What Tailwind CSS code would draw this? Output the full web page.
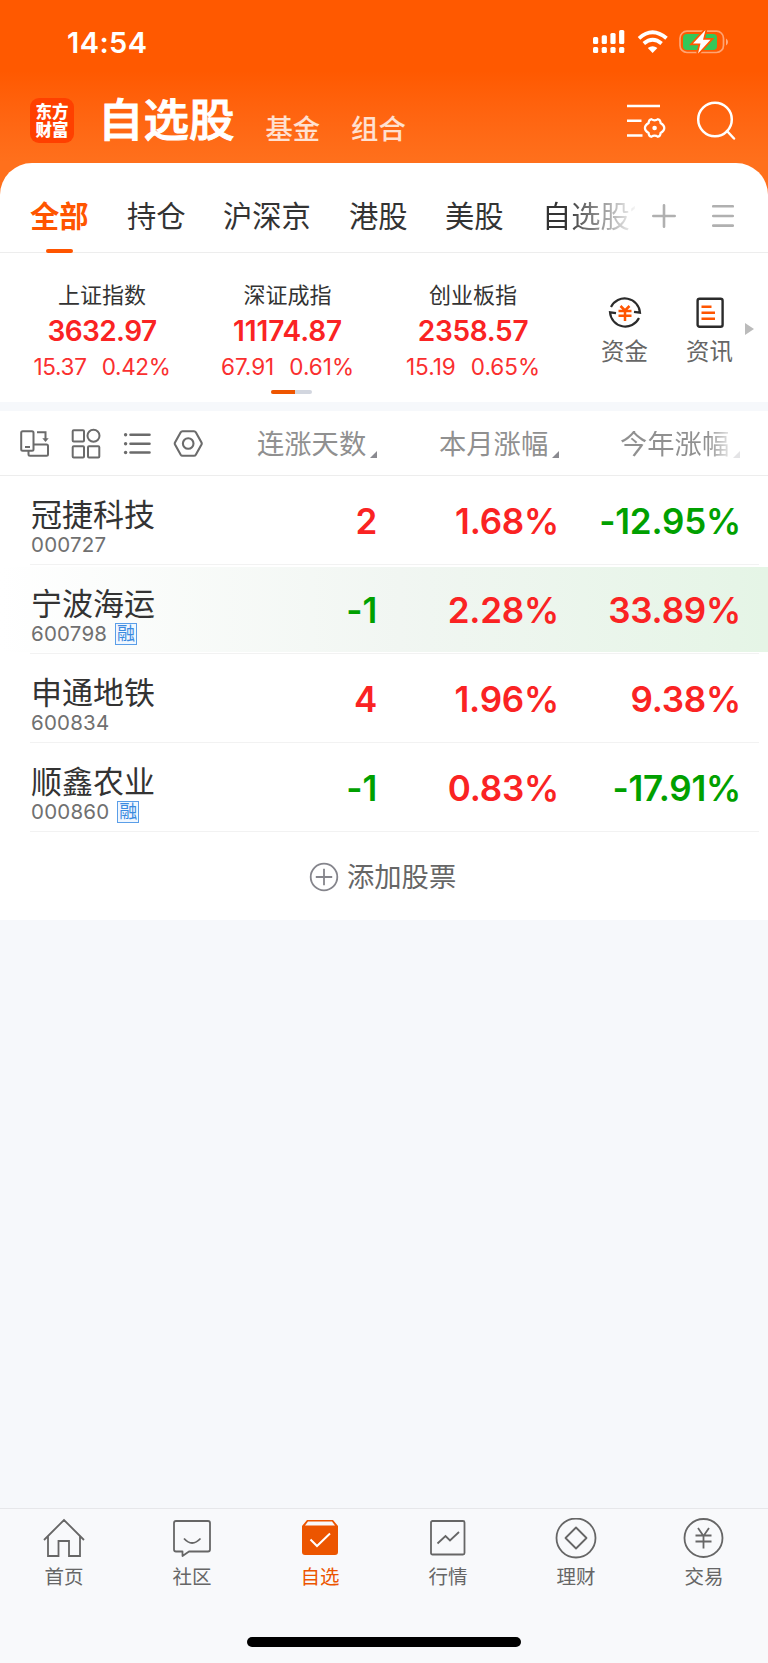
<!DOCTYPE html>
<html lang="zh-CN">
<head>
    <meta charset="UTF-8">
    <meta name="viewport" content="width=device-width, initial-scale=1.0">
    <title>自选股</title>
    <script src="https://cdn.jsdelivr.net/npm/@tailwindcss/browser@4"></script>
</head>
<body class="w-[768px] h-[1663px] flex flex-col overflow-hidden bg-[#f6f8fb] font-['Inter','Noto_Sans_CJK_SC',sans-serif] leading-none whitespace-nowrap text-[#333]">

    <!-- Cabecera -->
    <header class="h-[203px] -mb-10 shrink-0 bg-linear-to-b from-[#ff5900] from-35% to-[#ff701c] to-80% text-white">
        <div class="h-[84px] flex items-center justify-between pl-[67px] pr-10">
            <span class="text-[29px] font-semibold tracking-[0.4px]">14:54</span>
            <svg class="w-[136px] h-6" viewBox="0 0 136 24" fill="#fff">
                <rect x="1" y="7" width="5.2" height="7" rx="1.5"/>
                <rect x="9.7" y="5.3" width="5.2" height="8.7" rx="1.5"/>
                <rect x="18.4" y="3" width="5.2" height="11" rx="1.5"/>
                <rect x="27.1" y="0" width="5.2" height="14" rx="1.5"/>
                <rect x="1" y="17" width="5.2" height="6" rx="1.5"/>
                <rect x="9.7" y="17" width="5.2" height="6" rx="1.5"/>
                <rect x="18.4" y="17" width="5.2" height="6" rx="1.5"/>
                <rect x="27.1" y="17" width="5.2" height="6" rx="1.5"/>
                <g fill="none" stroke="#fff" stroke-width="3.8">
                    <path d="M47 8.3 Q60.5 -3.8 74.5 8.3"/>
                    <path d="M51.8 13.5 Q60.6 6 69.6 13.5"/>
                </g>
                <path d="M55.8 18 Q60.6 14.4 65.4 18 L60.6 23Z"/>
                <rect x="88" y="1.2" width="43.5" height="21.3" rx="7" fill="none" stroke="#fff" stroke-opacity=".45" stroke-width="1.7"/>
                <path d="M134 8.5 Q136 9.5 136 12 Q136 14.5 134 15.5Z" fill-opacity=".5"/>
                <rect x="91" y="4" width="34" height="16" rx="4" fill="#34c759"/>
                <path d="M113.5 0 L101 13.5 H108.5 L106 23.5 L118.5 9.8 H111Z" stroke="#ff5900" stroke-width="3.5" paint-order="stroke"/>
            </svg>
        </div>
        <div class="h-[79px] flex items-start pl-[30px] pr-8">
            <div class="mt-[14px] w-11 h-[45px] rounded-[9px] bg-[#ff4000] flex flex-col items-center justify-center text-[16.5px] leading-[18px] font-black">
                <span>东方</span>
                <span>财富</span>
            </div>
            <h1 class="mt-[14px] ml-6 text-[45.5px] font-medium [-webkit-text-stroke:1px_white]">自选股</h1>
            <span class="mt-8 ml-[31px] text-[27.3px] font-medium text-white/80">基金</span>
            <span class="mt-8 ml-[31px] text-[27.3px] font-medium text-white/80">组合</span>
            <svg class="mt-[18px] ml-auto w-10 h-9" viewBox="0 0 40 36" fill="none" stroke="#fff" stroke-width="2.5">
                <path d="M1 4H34M1 18.7H15.5M1 33.4H16.5"/>
                <path d="M25.2 17.2Q28.6 19.5 32 17.2Q34.5 17.8 34.6 21Q38.3 23.2 38.3 26Q38.3 28.8 34.6 31Q34.5 34.2 32 34.8Q28.600 32.5 25.2 34.8Q22.7 34.2 22.6 31Q18.9 28.8 18.9 26Q18.9 23.2 22.6 21Q22.7 17.8 25.2 17.2Z" stroke-width="2.2"/>
                <circle cx="28.6" cy="26" r="2.3" fill="#fff" stroke="none"/>
            </svg>
            <svg class="mt-4 ml-[30px] w-10 h-10" viewBox="0 0 40 40" fill="none" stroke="#fff" stroke-width="2.5">
                <circle cx="19" cy="19.5" r="16.8"/>
                <path d="M31 31 38 38.500" stroke-linecap="round"/>
            </svg>
        </div>
    </header>

    <!-- Pestañas e índices -->
    <section class="h-[239px] shrink-0 rounded-t-[32px] bg-white">
        <nav class="relative h-[90px] flex items-start pt-[38px] pl-[30px] border-b border-[#ededed] text-[29.3px]">
            <span class="w-[97px] pt-px font-semibold text-[#ff5500]">全部</span>
            <span class="w-[96px] pt-px">持仓</span>
            <span class="w-[126px] pt-px">沪深京</span>
            <span class="w-[96px] pt-px">港股</span>
            <span class="w-[97px] pt-px">美股</span>
            <span class="w-[93px] pt-px overflow-hidden bg-linear-to-r from-[#333] from-25% to-[#333]/5 to-100% bg-clip-text text-transparent">自选股1</span>
            <svg class="mt-[3px] ml-[17px] w-6 h-6" viewBox="0 0 24 24" stroke="#b0b0b0" stroke-width="2.6" stroke-linecap="round"><path d="M1.3 12H22.7M12 1.3V22.7"/></svg>
            <svg class="mt-[3px] ml-9 w-[22px] h-6" viewBox="0 0 22 24" stroke="#b0b0b0" stroke-width="2.6" stroke-linecap="round"><path d="M1.2 2.3H20.8M1.2 12H20.8M1.2 21.6H20.8"/></svg>
            <i class="absolute left-[46px] bottom-[-1px] w-[27px] h-1 rounded-full bg-[#ff5500]"></i>
        </nav>
        <div class="relative h-[149px] flex pl-[9px]">
            <div class="w-[186px] pt-[31px] flex flex-col items-center">
                <span class="text-[22px]">上证指数</span>
                <b class="mt-[11px] text-[28px] font-semibold tracking-[-0.6px] text-[#fa2323]">3632.97</b>
                <span class="mt-[11px] flex gap-[15px] text-[22.5px] tracking-[-0.3px] text-[#fa2f2f]"><span>15.37</span><span>0.42%</span></span>
            </div>
            <div class="w-[185px] pt-[31px] flex flex-col items-center">
                <span class="text-[22px]">深证成指</span>
                <b class="mt-[11px] text-[28px] font-semibold tracking-[-0.1px] text-[#fa2323]">11174.87</b>
                <span class="mt-[11px] flex gap-[15px] text-[22.5px] text-[#fa2f2f]"><span>67.91</span><span>0.61%</span></span>
            </div>
            <div class="w-[186px] pt-[31px] flex flex-col items-center">
                <span class="text-[22px]">创业板指</span>
                <b class="mt-[11px] text-[28px] font-semibold tracking-[-0.3px] text-[#fa2323]">2358.57</b>
                <span class="mt-[11px] flex gap-[15px] text-[22.5px] text-[#fa2f2f]"><span>15.19</span><span>0.65%</span></span>
            </div>
            <div class="ml-[16px] w-[85px] pt-[42px] flex flex-col items-center text-[23.4px] text-[#666]">
                <svg class="w-[34px] h-[34px]" viewBox="0 0 34 34" fill="none" stroke="#2b2b2b" stroke-width="2.2">
                    <path d="M3 12A15.3 15.3 0 0 1 32 17.7L26 16.8"/>
                    <path d="M31 23A15.3 15.3 0 0 1 2 17.3L8 18.2"/>
                    <path d="M12.5 11 17 15.500 21.5 11M10.5 16H23.500M10.5 20.8H23.5M17 15.5V26" stroke="#ff5500" stroke-width="2.5"/>
                </svg>
                <span class="mt-[11px]">资金</span>
            </div>
            <div class="w-[85px] pt-[42px] flex flex-col items-center text-[23.4px] text-[#666]">
                <svg class="w-[34px] h-[34px]" viewBox="0 0 34 34" fill="none" stroke="#2b2b2b" stroke-width="2.4">
                    <rect x="4.6" y="3.7" width="25" height="28" rx="2"/>
                    <path d="M8.500 11.8H18.500M8.500 17.8H22M8.500 23.7H22" stroke="#ff5500" stroke-width="2.5"/>
                </svg>
                <span class="mt-[11px]">资讯</span>
            </div>
            <svg class="absolute left-[745px] top-[70px] w-[9px] h-3" viewBox="0 0 9 12" fill="#bbb"><path d="M0 0 9 6 0 12Z"/></svg>
            <div class="absolute left-[271px] top-[137px] w-[41px] h-1 rounded-full bg-[#d2d6df] overflow-hidden"><i class="block w-6 h-full bg-[#ee5500]"></i></div>
        </div>
    </section>

    <!-- Lista de valores -->
    <section class="mt-[9px] h-[509px] shrink-0 bg-white">
        <div class="h-[65px] flex items-start pl-[20px] border-b border-[#ededed] text-[#6b6b6b]">
            <svg class="mt-[18px] w-[30px] h-[30px]" viewBox="0 0 30 30" fill="none" stroke="currentColor" stroke-width="2">
                <rect x="1.2" y="2.2" width="12.3" height="19.5" rx="1.5"/>
                <path d="M5 18H10"/>
                <path d="M13.5 15.5H26.5Q28 15.5 28 17V25.2Q28 26.7 26.5 26.7H10Q8.5 26.7 8.5 25.2V22"/>
                <path d="M17 3.2H25.5V11"/><path d="M22.3 9.2H28.7L25.5 13Z" fill="currentColor" stroke="none"/>
            </svg>
            <svg class="mt-[17px] ml-[21px] w-[30px] h-[31px]" viewBox="0 0 30 31" fill="none" stroke="currentColor" stroke-width="2">
                <rect x="1.7" y="2.2" width="11.3" height="11.3" rx="1"/><circle cx="22.5" cy="7.8" r="6"/>
                <rect x="1.7" y="18.2" width="11.3" height="11.3" rx="1"/><rect x="17" y="18.2" width="11.3" height="11.3" rx="1"/>
            </svg>
            <svg class="mt-[18px] ml-[22px] w-[28px] h-[30px]" viewBox="0 0 28 30" fill="currentColor">
                <path d="M7.5 5.8H26.5M7.5 14.7H26.5M7.5 23.5H26.5" stroke="currentColor" stroke-width="2.6" stroke-linecap="round"/>
                <circle cx="2.6" cy="5.8" r="1.7"/><circle cx="2.6" cy="14.7" r="1.7"/><circle cx="2.6" cy="23.5" r="1.7"/>
            </svg>
            <svg class="mt-[18px] ml-[22px] w-[30px] h-[30px]" viewBox="0 0 30 30" fill="none" stroke="currentColor" stroke-width="2.1">
                <path d="M9.5 2.3H21Q22.2 2.3 22.8 3.3L28.5 13.5Q29 14.5 28.5 15.5L22.8 25.7Q22.2 26.7 21 26.7H9.5Q8.3 26.7 7.7 25.7L2 15.5Q1.5 14.5 2 13.5L7.7 3.3Q8.3 2.3 9.5 2.3Z"/>
                <circle cx="15.2" cy="14.5" r="5.3"/>
            </svg>
            <div class="mt-5 ml-[54px] flex text-[27.3px] text-[#909090]">
                <span class="w-[182px] flex items-end">连涨天数<svg class="ml-1 w-[7px] h-[7px]" viewBox="0 0 7 7" fill="#8a8a90"><path d="M7 0V7H0Z"/></svg></span>
                <span class="w-[181px] flex items-end">本月涨幅<svg class="ml-1 w-[7px] h-[7px]" viewBox="0 0 7 7" fill="#8a8a90"><path d="M7 0V7H0Z"/></svg></span>
                <span class="flex items-end"><span class="bg-linear-to-r from-[#909090] from-80% to-[#909090]/25 bg-clip-text text-transparent">今年涨幅</span><svg class="ml-1 w-[7px] h-[7px]" viewBox="0 0 7 7" fill="#e4e4e6"><path d="M7 0V7H0Z"/></svg></span>
            </div>
        </div>

        <ul class="text-[35px] font-semibold tracking-[-0.2px] text-[#fa2323]">
            <li class="h-[89px] flex">
                <div class="ml-[30px] w-[729px] flex border-b border-[#f2f2f2]">
                    <div class="w-[190px] pt-[23px] pl-px tracking-normal text-[#333]">
                        <p class="text-[31px] font-normal">冠捷科技</p>
                        <p class="h-[22px] mt-1 flex items-center text-[20.5px] font-normal tracking-[0.2px] text-[#707070]">000727</p>
                    </div>
                    <span class="w-[157px] pt-[28px] text-right">2</span>
                    <span class="w-[182px] pt-[28px] text-right">1.68%</span>
                    <span class="w-[182px] pt-[28px] text-right text-[#00a000]">-12.95%</span>
                </div>
            </li>
            <li class="h-[89px] flex relative">
                <div class="absolute inset-x-0 top-[2px] bottom-[2px] bg-linear-to-r from-white via-[#f1f6f2] via-52% to-[#e5f5e6]"></div>
                <div class="relative ml-[30px] w-[729px] flex border-b border-[#f2f2f2]">
                    <div class="w-[190px] pt-[23px] pl-px tracking-normal text-[#333]">
                        <p class="text-[31px] font-normal">宁波海运</p>
                        <p class="h-[22px] mt-1 flex items-center text-[20.5px] font-normal tracking-[0.2px] text-[#707070]">600798<i class="ml-2 w-[22px] h-[22px] flex items-center justify-center border border-[#5a9ee8] bg-[#f0f7ff] text-[18px] not-italic text-[#3a8ae0]">融</i></p>
                    </div>
                    <span class="w-[157px] pt-[28px] text-right text-[#00a000]">-1</span>
                    <span class="w-[182px] pt-[28px] text-right">2.28%</span>
                    <span class="w-[182px] pt-[28px] text-right">33.89%</span>
                </div>
            </li>
            <li class="h-[89px] flex">
                <div class="ml-[30px] w-[729px] flex border-b border-[#f2f2f2]">
                    <div class="w-[190px] pt-[23px] pl-px tracking-normal text-[#333]">
                        <p class="text-[31px] font-normal">申通地铁</p>
                        <p class="h-[22px] mt-1 flex items-center text-[20.5px] font-normal tracking-[0.2px] text-[#707070]">600834</p>
                    </div>
                    <span class="w-[157px] pt-[28px] text-right">4</span>
                    <span class="w-[182px] pt-[28px] text-right">1.96%</span>
                    <span class="w-[182px] pt-[28px] text-right">9.38%</span>
                </div>
            </li>
            <li class="h-[89px] flex">
                <div class="ml-[30px] w-[729px] flex border-b border-[#f2f2f2]">
                    <div class="w-[190px] pt-[23px] pl-px tracking-normal text-[#333]">
                        <p class="text-[31px] font-normal">顺鑫农业</p>
                        <p class="h-[22px] mt-1 flex items-center text-[20.5px] font-normal tracking-[0.2px] text-[#707070]">000860<i class="ml-2 w-[22px] h-[22px] flex items-center justify-center border border-[#5a9ee8] bg-[#f0f7ff] text-[18px] not-italic text-[#3a8ae0]">融</i></p>
                    </div>
                    <span class="w-[157px] pt-[28px] text-right text-[#00a000]">-1</span>
                    <span class="w-[182px] pt-[28px] text-right">0.83%</span>
                    <span class="w-[182px] pt-[28px] text-right text-[#00a000]">-17.91%</span>
                </div>
            </li>
        </ul>

        <div class="h-[88px] pl-[309px] flex items-center gap-2 text-[27.3px] text-[#666]">
            <svg class="mt-px w-[30px] h-[30px]" viewBox="0 0 30 30" fill="none" stroke="#85858c" stroke-width="1.8"><circle cx="15" cy="15" r="13.3"/><path d="M6.8 15H23.2M15 6.8V23.2"/></svg>
            <span class="pt-1">添加股票</span>
        </div>
    </section>

    <!-- Barra inferior -->
    <footer class="mt-auto h-[155px] shrink-0 border-t border-[#e6e7ea] bg-[#f8f9fb]">
        <nav class="h-[128px] grid grid-cols-6 text-[19.5px] text-[#666]">
            <a class="pt-[9px] flex flex-col items-center gap-2">
                <svg class="w-[42px] h-[42px]" viewBox="0 0 42 42" fill="none" stroke="currentColor" stroke-width="1.8">
                    <path d="M1 22 21 2 41 22M5 18.5V38H15.5V23H26V38H37V18.5"/>
                </svg>
                首页
            </a>
            <a class="pt-[9px] flex flex-col items-center gap-2">
                <svg class="w-[42px] h-[42px]" viewBox="0 0 42 42" fill="none" stroke="currentColor" stroke-width="1.8" stroke-linejoin="round">
                    <path d="M5 3H37Q39 3 39 5V31.5Q39 33.5 37 33.5H18L11.5 38V33.5H5Q3 33.5 3 31.5V5Q3 3 5 3Z"/>
                    <path d="M13 20.5Q21 29.5 29.5 20.5"/>
                </svg>
                社区
            </a>
            <a class="pt-[9px] flex flex-col items-center gap-2 text-[#ec5500]">
                <svg class="w-[42px] h-[42px]" viewBox="0 0 42 42" fill="currentColor">
                    <path d="M8 2H34L39 8V34Q39 37 36 37H6Q3 37 3 34V8ZM9 3.5 6 7.5H36L33 3.5Z" fill-rule="evenodd"/>
                    <path d="M11.5 21.5 18 28 31 15.5" fill="none" stroke="#fff" stroke-width="2"/>
                </svg>
                自选
            </a>
            <a class="pt-[9px] flex flex-col items-center gap-2">
                <svg class="w-[42px] h-[42px]" viewBox="0 0 42 42" fill="none" stroke="currentColor" stroke-width="1.8">
                    <rect x="4" y="3" width="33.5" height="33.5" rx="1.5"/>
                    <path d="M10.5 25.5 18.5 18 23 22.5 32 14"/>
                </svg>
                行情
            </a>
            <a class="pt-[9px] flex flex-col items-center gap-2">
                <svg class="w-[42px] h-[42px]" viewBox="0 0 42 42" fill="none" stroke="currentColor" stroke-width="1.8" stroke-linejoin="round">
                    <circle cx="21" cy="20" r="19.5"/><path d="M21 9.5 31.5 20 21 30.5 10.5 20Z"/>
                </svg>
                理财
            </a>
            <a class="pt-[9px] flex flex-col items-center gap-2">
                <svg class="w-[42px] h-[42px]" viewBox="0 0 42 42" fill="none" stroke="currentColor" stroke-width="1.8">
                    <circle cx="20.5" cy="20" r="19"/><path d="M15 10 20.5 18 26 10M12.5 17.5H28.5M12.5 23.5H28.5M20.5 17.5V30.5"/>
                </svg>
                交易
            </a>
        </nav>
        <div class="mx-auto w-[274px] h-[10px] rounded-full bg-black"></div>
    </footer>
</body>
</html>
